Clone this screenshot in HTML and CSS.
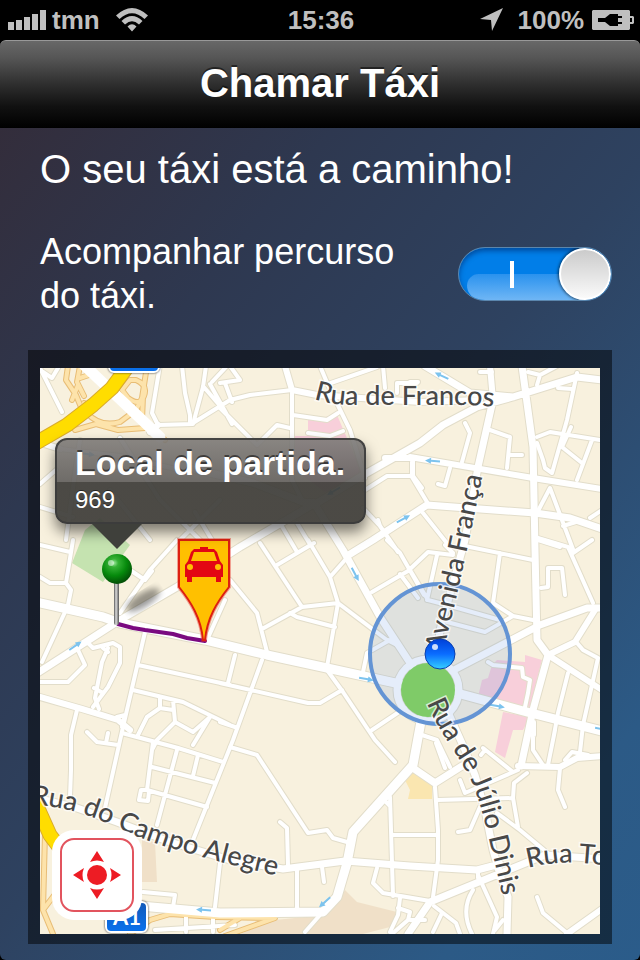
FILE: index.html
```html
<!DOCTYPE html>
<html lang="pt">
<head>
    <meta charset="UTF-8">
    <meta name="viewport" content="width=device-width, initial-scale=1.0">
    <title>Chamar Táxi</title>
    <link rel="stylesheet" href="styles.css">
</head>
<body>

<div class="status-bar">
    <div class="status-left">
        <svg class="icon" width="38" height="20" viewBox="0 0 38 20">
            <path d="M0 12h6v8H0zM8 10h6v10H8zM16 7h6v13h-6zM24 4h6v16h-6zM32 0h6v20h-6z"/>
        </svg>
        <span class="carrier">tmn</span>
        <svg class="icon wifi" width="32" height="24" viewBox="0 0 32 24">
            <path d="M0 7.500Q16-7.500 32 7.500L28.500 11Q16-.5 3.500 11ZM5.500 13Q16 3 26.500 13L23 16.500Q16 10 9 16.500ZM11.500 18.500Q16 14 20.500 18.500L16 23.500Z"/>
        </svg>
    </div>
    <span class="clock">15:36</span>
    <div class="status-right">
        <svg class="icon" width="23" height="24" viewBox="0 0 23 24">
            <path d="M23 0L12 23L11 12L0 11Z"/>
        </svg>
        <span class="charge">100%</span>
        <svg class="icon battery" width="42" height="20" viewBox="0 0 42 20">
            <path fill-rule="evenodd" d="M1 0H37L38 1V6H41L42 7V13L41 14H38V19L37 20H1L0 19V1ZM38 8V12H40V8Z"/>
            <path class="plug" d="M6 8H13L18 4H26V6H30V8H26V12H30V14H26V16H18L13 12H6Z"/>
        </svg>
    </div>
</div>

<header class="nav-bar">
    <h1>Chamar Táxi</h1>
</header>

<main class="content">
    <p class="message">O seu táxi está a caminho!</p>

    <div class="track-row">
        <label for="track">Acompanhar percurso do táxi.</label>
        <input type="checkbox" id="track" class="switch" checked>
    </div>

    <div class="map-frame">
        <div class="map">
            <svg class="map-canvas" viewBox="40 368 560 566" role="img" aria-label="Mapa">
                <defs>
                    <path id="minor" d="M160 365L152 413L158 425L193 424L203 387L206 366M182 366L185 393L190 415V422M210 384L232 424M212 382L227 366M193 423L230 400L250 395L292 390M221 407L203 386M40 368L62 412M40 370L52 378L58 368M40 484L56 470M60 449L120 456L180 470M40 507L73 517M80 440L74 480L66 540M120 438L160 500L200 540
                        M220 383L240 380L230 366M225 383L232 402M320 366L328 385L350 430L365 478M328 384L377 367M383 366L385 388M397 393V383H417M292 393V480L302 500M293 415L327 420L338 413M308 433L330 436L343 431M220 408L257 445L277 425L290 428M365 490L387 476H413L422 488M413 460V475M363 508L380 526L378 520M380 526L398 552M280 523L297 552M297 523L311 546
                        M110 490L150 540M177 540L150 570L120 613M195 512L215 545M130 570L145 580L152 571M225 600L207 640M180 540L220 500
                        M308 540L330 577L338 603L327 667M260 543L302 607M277 565L314 543M262 629L302 607L338 603L387 640L397 645M330 577L345 560M290 613L297 617L335 627M390 640L367 653L363 672M230 580L257 613L267 652M372 592L408 571L428 552L453 555M387 540L400 553L424 595M400 574L418 598
                        M235 655L228 683M220 683L308 703H320L342 690M262 660L233 740L193 840M327 670L343 692L375 740L395 762M372 730L405 708M220 722L235 727
                        M73 540L66 583L71 590L68 605M40 545L70 552M40 577L50 583H65M65 612L42 662M40 682H68L85 665L78 650M88 643L93 648L113 643L120 647V663L108 687L93 707M108 648L102 662L95 698L99 709M94 688L103 693M103 648L108 652
                        M77 710L71 735V770L70 797M145 632L123 727L105 808M138 665L230 685M133 690L183 702L230 725M117 717L125 715L122 727M137 737L147 717L160 708L173 710M160 708V697M173 700L175 722L193 732L210 717M175 722L157 740L153 748M193 745L210 717M87 732L97 742L118 745M108 733L106 743M122 733L178 748L223 762M153 742L147 790L207 807M152 767L215 783M177 750L157 825M198 755L193 776M147 790H141L139 800L148 801L149 791
                        M230 747L257 755L308 833L327 830L333 838L347 842M280 822L287 828L288 865M297 868V910M322 867L324 882M390 797L393 896M386 802L390 806M393 835H437M377 868L373 883L383 893L430 901M400 898L398 915L390 932M398 908L410 912L408 920L392 934M410 920H425M220 863L215 907M143 892L175 895L173 907M186 917V932M213 917V932M155 930L235 925M320 915L305 932
                        M435 787L438 830V860L433 897M437 800L513 798M518 770L465 793L460 780M527 773L514 783L513 798L518 827M480 807L470 830L458 832M497 813L520 830L550 855M560 768L558 790L565 807M537 897L543 913L567 933M478 875L497 917L493 934M473 890Q460 910 472 934M503 920L495 930M434 906L456 923L460 934M442 913L433 932M478 870V878
                        M422 735L437 740L450 767M436 743L445 768M483 748L513 772M481 755L485 750M533 733V750L543 765M555 730L548 765M565 760L572 752L588 755M583 725L580 752M568 673L558 713L553 740M577 643L583 650L598 658L583 725M534 722V735M410 570L428 600L447 605L500 620M437 555L427 600M445 545L453 553M460 545L533 560M500 553L493 603L513 616L533 620M447 622L485 632L513 616M538 538L568 547L593 603M573 553L592 540M541 588L548 587V568H562L565 595M488 662L493 665L522 668L523 677L530 680L528 693L525 707
                        M480 372H492M528 372L540 375L557 366M540 375L537 385M577 373L567 420L552 473L545 468L543 460L537 443M558 388L572 389M537 437L550 432L600 440M562 447L582 463M592 440L577 480M571 427L562 447M490 430L510 437L507 468M510 455H522M465 423L470 433L462 462M450 468L445 486L438 484M412 462V477L427 502M423 513L450 547M537 513L550 488L574 552M563 526L576 522M538 540L560 547M590 518L602 510M410 382H418"/>
                    <path id="medium" d="M38 442L60 449M285 366L292 390L317 395L420 402L480 400M410 457L533 478L602 489M385 458L412 458M493 400L490 366M40 697L82 709L118 720L130 730M518 766L560 767L577 758L602 756M548 655L575 642L595 610M548 655L602 690M567 934L602 909M158 425L150 432"/>
                    <path id="major" d="M36 798L77 808L117 822L170 842L230 860L283 869L345 861L410 866L477 870L500 864M180 466L253 483L303 502L317 503L367 473L420 443L443 425L477 407L513 397L577 377L602 380M425 366L470 393L513 397M314 503L343 550L380 617L416 672M312 505L240 547L177 587L120 620L36 674M522 366L533 447L535 550L537 640L548 655L533 710L521 766M347 556L373 540L427 505L535 513L570 518L602 529M493 400L478 467L465 540L440 630L436 668M452 671L540 625L587 608H602M602 859L545 855L430 902L408 934M447 710L465 750L475 775L485 810L493 850L500 875L508 897L507 934M413 768L435 783L462 766"/>
                    <path id="avenue" d="M36 602L103 617L120 623L205 640L267 655L327 668L400 684M452 690L457 693L527 712L602 731M422 716L413 765L353 832L347 863L337 897L323 912L220 913L140 906"/>
                    <path id="motorway" d="M128 366L112 388L93 405L67 425L36 443M32 795L50 835L78 872"/>
                    <path id="ramps" d="M68 366L66 380L76 395L83 412M80 378L92 374L103 384M78 385L72 400M84 403L86 412Q100 428 120 422L136 410L142 398L147 366M136 380Q148 385 144 396T128 398L122 390L130 380ZM80 366L77 382L84 396M143 396L142 420L165 440M75 430L96 424L118 430L145 428M45 833L43 910L53 934M43 910L62 885M130 934L150 920L170 914L215 917L275 918L225 936M240 918L220 930"/>
                    <path id="lane-arrow" d="M-7-1H2V-3L8 0L2 3V1H-7Z"/>

                    <path id="lbl-francos" d="M314 399Q332 405 355 405H460Q485 405 510 409"/>
                    <path id="lbl-franca" d="M443 653L453 612L466 555L490 440"/>
                    <path id="lbl-dinis" d="M427 703C440 736 465 763 474 787S490 842 508 920"/>
                    <path id="lbl-campo" d="M31 804C70 808 90 815 120 829S190 856 300 881"/>
                    <path id="lbl-to" d="M528 868Q555 861 580 863T640 868"/>

                    <radialGradient id="green-ball" cx="0.4" cy="0.3" r="0.7">
                        <stop offset="0" stop-color="#9be89b"/>
                        <stop offset="0.2" stop-color="#35b135"/>
                        <stop offset="0.6" stop-color="#068a0c"/>
                        <stop offset="1" stop-color="#034f06"/>
                    </radialGradient>
                    <linearGradient id="blue-ball" x1="0" y1="0" x2="0" y2="1">
                        <stop offset="0" stop-color="#0040d8"/>
                        <stop offset="0.5" stop-color="#0a6cff"/>
                        <stop offset="1" stop-color="#35d0ff"/>
                    </linearGradient>
                    <linearGradient id="stick">
                        <stop offset="0" stop-color="#555"/>
                        <stop offset="0.4" stop-color="#ddd"/>
                        <stop offset="1" stop-color="#555"/>
                    </linearGradient>
                    <linearGradient id="sign" x1="0" y1="0" x2="0" y2="1">
                        <stop offset="0" stop-color="#1259b8"/>
                        <stop offset="1" stop-color="#0a72ee"/>
                    </linearGradient>
                    <filter id="soft">
                        <feGaussianBlur stdDeviation="3"/>
                    </filter>
                </defs>

                <!-- blocks and parks -->
                <path class="land" d="M40 368H600V934H40Z"/>
                <path class="pink" d="M308 420L337 415L363 475L325 492L295 470V436H308ZM525 655L542 660L530 707L478 697L482 680L488 678L492 665L497 660L525 662ZM503 712L530 717L523 730H513L505 758L495 752Z"/>
                <path class="green" d="M72 563L85 530L100 518L130 545L103 582Z"/>
                <path class="sand" d="M142 840L155 842L157 882H142ZM345 890L357 902L397 912L390 927L363 934H240L275 920L325 915Z"/>
                <path class="amber" d="M405 780L415 771L425 774L432 784V799H408L410 790Z"/>

                <!-- roads: outline first, then the surface -->
                <g class="casing">
                    <use href="#minor" class="w6"/>
                    <use href="#ramps" class="w6 ramp-edge"/>
                    <use href="#medium" class="w8"/>
                    <use href="#major" class="w9"/>
                    <use href="#avenue" class="w11"/>
                    <circle cx="428" cy="690" r="31" class="w9"/>
                </g>
                <g class="surface">
                    <use href="#minor" class="w4"/>
                    <use href="#ramps" class="w4 ramp"/>
                    <use href="#medium" class="w6"/>
                    <use href="#major" class="w7"/>
                    <use href="#avenue" class="w9"/>
                    <circle cx="428" cy="690" r="31" class="w7"/>
                    <path class="w11" d="M83 364L160 437"/>
                    <use href="#motorway" class="w15 motorway-edge"/>
                    <use href="#motorway" class="w13 motorway"/>
                </g>

                <g class="lane-arrows">
                    <use href="#lane-arrow" transform="translate(442 376) rotate(205)"/>
                    <use href="#lane-arrow" transform="translate(433 461) rotate(184)"/>
                    <use href="#lane-arrow" transform="translate(403 519) rotate(-28)"/>
                    <use href="#lane-arrow" transform="translate(355 574) rotate(62)"/>
                    <use href="#lane-arrow" transform="translate(366 679) rotate(10)"/>
                    <use href="#lane-arrow" transform="translate(497 706) rotate(10)"/>
                    <use href="#lane-arrow" transform="translate(75 646) rotate(-35)"/>
                    <use href="#lane-arrow" transform="translate(325 902) rotate(138)"/>
                    <use href="#lane-arrow" transform="translate(204 910) rotate(184)"/>
                    <use href="#lane-arrow" transform="translate(334 491) rotate(150)"/>
                    <use href="#lane-arrow" transform="translate(87 454) rotate(8)"/>
                    <use href="#lane-arrow" transform="translate(602 729) rotate(10)"/>
                </g>

                <circle class="accuracy" cx="440" cy="654" r="70"/>
                <circle class="garden" cx="428" cy="690" r="27"/>

                <g class="street">
                    <text><textPath href="#lbl-francos">Rua de Francos</textPath></text>
                    <text><textPath href="#lbl-franca">Avenida França</textPath></text>
                    <text><textPath href="#lbl-dinis">Rua de Júlio Dinis</textPath></text>
                    <text><textPath href="#lbl-campo">Rua do Campo Alegre</textPath></text>
                    <text><textPath href="#lbl-to">Rua To</textPath></text>
                </g>

                <!-- motorway signs -->
                <g class="sign">
                    <rect x="109" y="346" width="50" height="26" rx="5"/>
                    <rect x="106" y="902" width="41" height="30" rx="5"/>
                    <text x="127" y="925">A1</text>
                </g>

                <!-- route and markers -->
                <path class="route" d="M118 624L133 628L145 630L173 634L187 638L205 641"/>
                <ellipse class="pin-shadow" cx="143" cy="600" rx="19" ry="7" transform="rotate(-32 143 600)"/>
                <rect x="114" y="582" width="5" height="43" rx="2" fill="url(#stick)"/>
                <circle cx="117" cy="569" r="15" fill="url(#green-ball)"/>
                <circle cx="111" cy="563" r="3" fill="#fff" opacity="0.5"/>

                <path class="taxi-glow" d="M179 540H229V587C217 602 207 618 205 640H203C201 618 191 602 179 587Z"/>
                <path class="taxi-pin" d="M179 540H229V587C217 602 207 618 205 640H203C201 618 191 602 179 587Z"/>
                <path class="taxi-car" fill-rule="evenodd" d="M200 547H208V549H214L217 552L220 561L223 565V577H221V582H216V577H192V582H187V577H185V565L188 561L191 552L194 549H200ZM194 552L191 561H217L214 552ZM190 564A3 3 0 1 0 190 570A3 3 0 1 0 190 564ZM218 564A3 3 0 1 0 218 570A3 3 0 1 0 218 564Z"/>

                <circle class="me" cx="440" cy="654" r="15" fill="url(#blue-ball)"/>
                <circle cx="435" cy="647" r="3" fill="#fff" opacity="0.8"/>
            </svg>

            <div class="callout">
                <strong>Local de partida.</strong>
                <span>969</span>
            </div>

            <button type="button" class="recenter" aria-label="Centrar mapa">
                <svg width="48" height="48" viewBox="0 0 48 48">
                    <circle cx="24" cy="24" r="10"/>
                    <path d="M24 0L31 11Q24 8 17 11ZM24 48L31 37Q24 40 17 37ZM0 24L11 17Q8 24 11 31ZM48 24L37 17Q40 24 37 31Z"/>
                </svg>
            </button>
        </div>
    </div>
</main>

</body>
</html>
```
FILE: styles.css
```css
*,
*::before,
*::after {
    margin: 0;
    padding: 0;
    box-sizing: border-box;
}

html {
    background: #000;
}

body {
    min-height: 100vh;
    font-family: "Liberation Sans", Arial, sans-serif;
    color: #fff;
    background: #000;
    display: flex;
    flex-direction: column;
}

/* status bar */
.status-bar {
    height: 40px;
    padding: 0 6px 0 8px;
    display: grid;
    grid-template-columns: 1fr auto 1fr;
    align-items: center;
    font-size: 26px;
    font-weight: bold;
    color: #bfbfbf;
}

.status-left,
.status-right {
    display: flex;
    align-items: center;
}

.status-right {
    justify-content: flex-end;
}

.icon {
    fill: #bfbfbf;
}

.carrier {
    margin-left: 6px;
}

.wifi {
    margin-left: 16px;
}

.charge {
    margin: 0 8px 0 15px;
}

.plug {
    fill: #000;
}

/* title bar */
.nav-bar {
    height: 88px;
    padding-bottom: 4px;
    display: flex;
    justify-content: center;
    align-items: center;
    background: linear-gradient(to bottom, #686868, #555 20%, #2e2e2e 50%, #111 75%, #000);
    border-top: 1px solid #999;
    border-radius: 6px 6px 0 0;
}

.nav-bar h1 {
    font-size: 40px;
    line-height: 48px;
    text-shadow: 0 -2px 0 rgba(0, 0, 0, 0.5);
}

/* page */
.content {
    flex: 1;
    padding: 17px 28px 16px;
    background: linear-gradient(130deg, #332d3b, #2e3850 25%, #2e4260 50%, #2c5a86 85%, #2b5c8a);
    border-radius: 0 0 6px 6px;
}

.message {
    padding-left: 12px;
    font-size: 40px;
    line-height: 48px;
}

.track-row {
    display: flex;
    justify-content: space-between;
    align-items: center;
    gap: 40px;
    margin: 37px 0 32px;
    padding-left: 12px;
}

.track-row label {
    font-size: 36px;
    line-height: 44px;
}

.switch {
    appearance: none;
    position: relative;
    flex: none;
    width: 154px;
    height: 54px;
    border: 1px solid #5b86ad;
    border-radius: 27px;
    background: #017ee8;
    box-shadow: inset 0 3px 5px rgba(0, 30, 90, 0.5);
    overflow: hidden;
}

/* gloss with the "on" bar */
.switch::before {
    content: "";
    position: absolute;
    left: 8px;
    right: 0;
    bottom: 0;
    height: 26px;
    border-radius: 16px 0 0 20px;
    background: linear-gradient(to bottom, #2a92ee, #6fb6f5);
}

.switch::after {
    content: "";
    position: absolute;
    top: 0;
    right: 0;
    width: 52px;
    height: 52px;
    border-radius: 50%;
    border: 2px solid #fff;
    background: linear-gradient(to bottom, #cbcbcb, #fafafa);
    box-shadow: 0 0 3px 1px rgba(0, 0, 0, 0.6);
}

.switch:checked {
    background: linear-gradient(#fff, #fff) 51px 13px / 4px 28px no-repeat, #017ee8;
}

.switch:checked::before {
    background: linear-gradient(#fff, #fff) 43px 0 / 4px 14px no-repeat, linear-gradient(to bottom, #2a92ee, #6fb6f5);
}

.switch:not(:checked)::after {
    right: auto;
    left: 0;
}

/* map */
.map-frame {
    padding: 18px 12px 10px;
    background: rgba(0, 0, 0, 0.5);
}

.map {
    position: relative;
}

.map-canvas {
    display: block;
    width: 100%;
}

.land { fill: #f8f1de; }
.pink { fill: #f8cfda; }
.green { fill: #c5e3b0; }
.sand { fill: #f0e0c8; }
.amber { fill: #fae6b0; }

.garden {
    fill: #7fcb68;
}

.casing,
.surface {
    fill: none;
    stroke-linejoin: round;
    stroke-linecap: round;
}

.casing { stroke: #e2ddca; }
.surface { stroke: #fff; }
.ramp-edge { stroke: #e8bd76; }
.ramp { stroke: #fde3ab; }
.motorway-edge { stroke: #d9ab2c; }
.motorway { stroke: #ffdd00; }

.w4 { stroke-width: 4px; }
.w6 { stroke-width: 6px; }
.w7 { stroke-width: 7px; }
.w8 { stroke-width: 8px; }
.w9 { stroke-width: 9px; }
.w11 { stroke-width: 11px; }
.w13 { stroke-width: 13px; }
.w15 { stroke-width: 15px; }

.lane-arrows {
    fill: #7cc3ee;
}

.accuracy {
    fill: rgba(80, 135, 220, 0.15);
    stroke: #6494d4;
    stroke-width: 4px;
}

.street {
    font-family: Lato, sans-serif;
    font-size: 27px;
    font-weight: 500;
    fill: #484848;
    stroke: rgba(255, 255, 255, 0.7);
    stroke-width: 3px;
    paint-order: stroke;
}

.sign rect {
    fill: url(#sign);
    stroke: #fff;
    stroke-width: 2px;
    filter: drop-shadow(0 0 1px #333);
}

.sign text {
    font-family: Lato, sans-serif;
    font-size: 22px;
    font-weight: bold;
    text-anchor: middle;
    fill: #fff;
}

.route {
    fill: none;
    stroke: #7a0a80;
    stroke-width: 4px;
    stroke-linecap: round;
    stroke-linejoin: round;
}

.pin-shadow {
    fill: rgba(0, 0, 0, 0.4);
    filter: url(#soft);
}

.taxi-glow {
    fill: none;
    stroke: rgba(230, 40, 30, 0.4);
    stroke-width: 4px;
}

.taxi-pin {
    fill: #ffc000;
    stroke: #dd2010;
    stroke-width: 2px;
}

.taxi-car {
    fill: #e30613;
}

.me {
    stroke: #0a3fae;
    stroke-width: 1px;
}

/* bubble over the start pin */
.callout {
    position: absolute;
    left: 15px;
    top: 70px;
    height: 86px;
    padding: 6px 19px 6px 18px;
    border: 2px solid rgba(60, 60, 60, 0.9);
    border-radius: 12px;
    background: linear-gradient(to bottom, rgba(125, 122, 120, 0.9), rgba(95, 93, 91, 0.9) 44px, rgba(62, 61, 57, 0.93) 44px);
    background-origin: border-box;
    box-shadow: 0 8px 14px rgba(0, 0, 0, 0.5);
    display: flex;
    flex-direction: column;
    white-space: nowrap;
}

.callout::after {
    content: "";
    position: absolute;
    left: 35px;
    top: 84px;
    border: 25px solid transparent;
    border-top-color: #3f403b;
    border-bottom: 0;
}

.callout strong {
    font-size: 34px;
    line-height: 34px;
    text-shadow: 0 -2px 0 rgba(0, 0, 0, 0.5);
}

.callout span {
    font-size: 24px;
    line-height: 40px;
    text-shadow: 0 -1px 0 rgba(0, 0, 0, 0.5);
}

.recenter {
    position: absolute;
    left: 12px;
    bottom: 14px;
    width: 90px;
    height: 90px;
    border: 0;
    border-radius: 22px;
    background: #fff;
    display: flex;
    justify-content: center;
    align-items: center;
    cursor: pointer;
}

.recenter::before {
    content: "";
    position: absolute;
    inset: 8px;
    border: 2px solid #e2545e;
    border-radius: 14px;
}

.recenter svg {
    fill: #ed1c24;
}
```
